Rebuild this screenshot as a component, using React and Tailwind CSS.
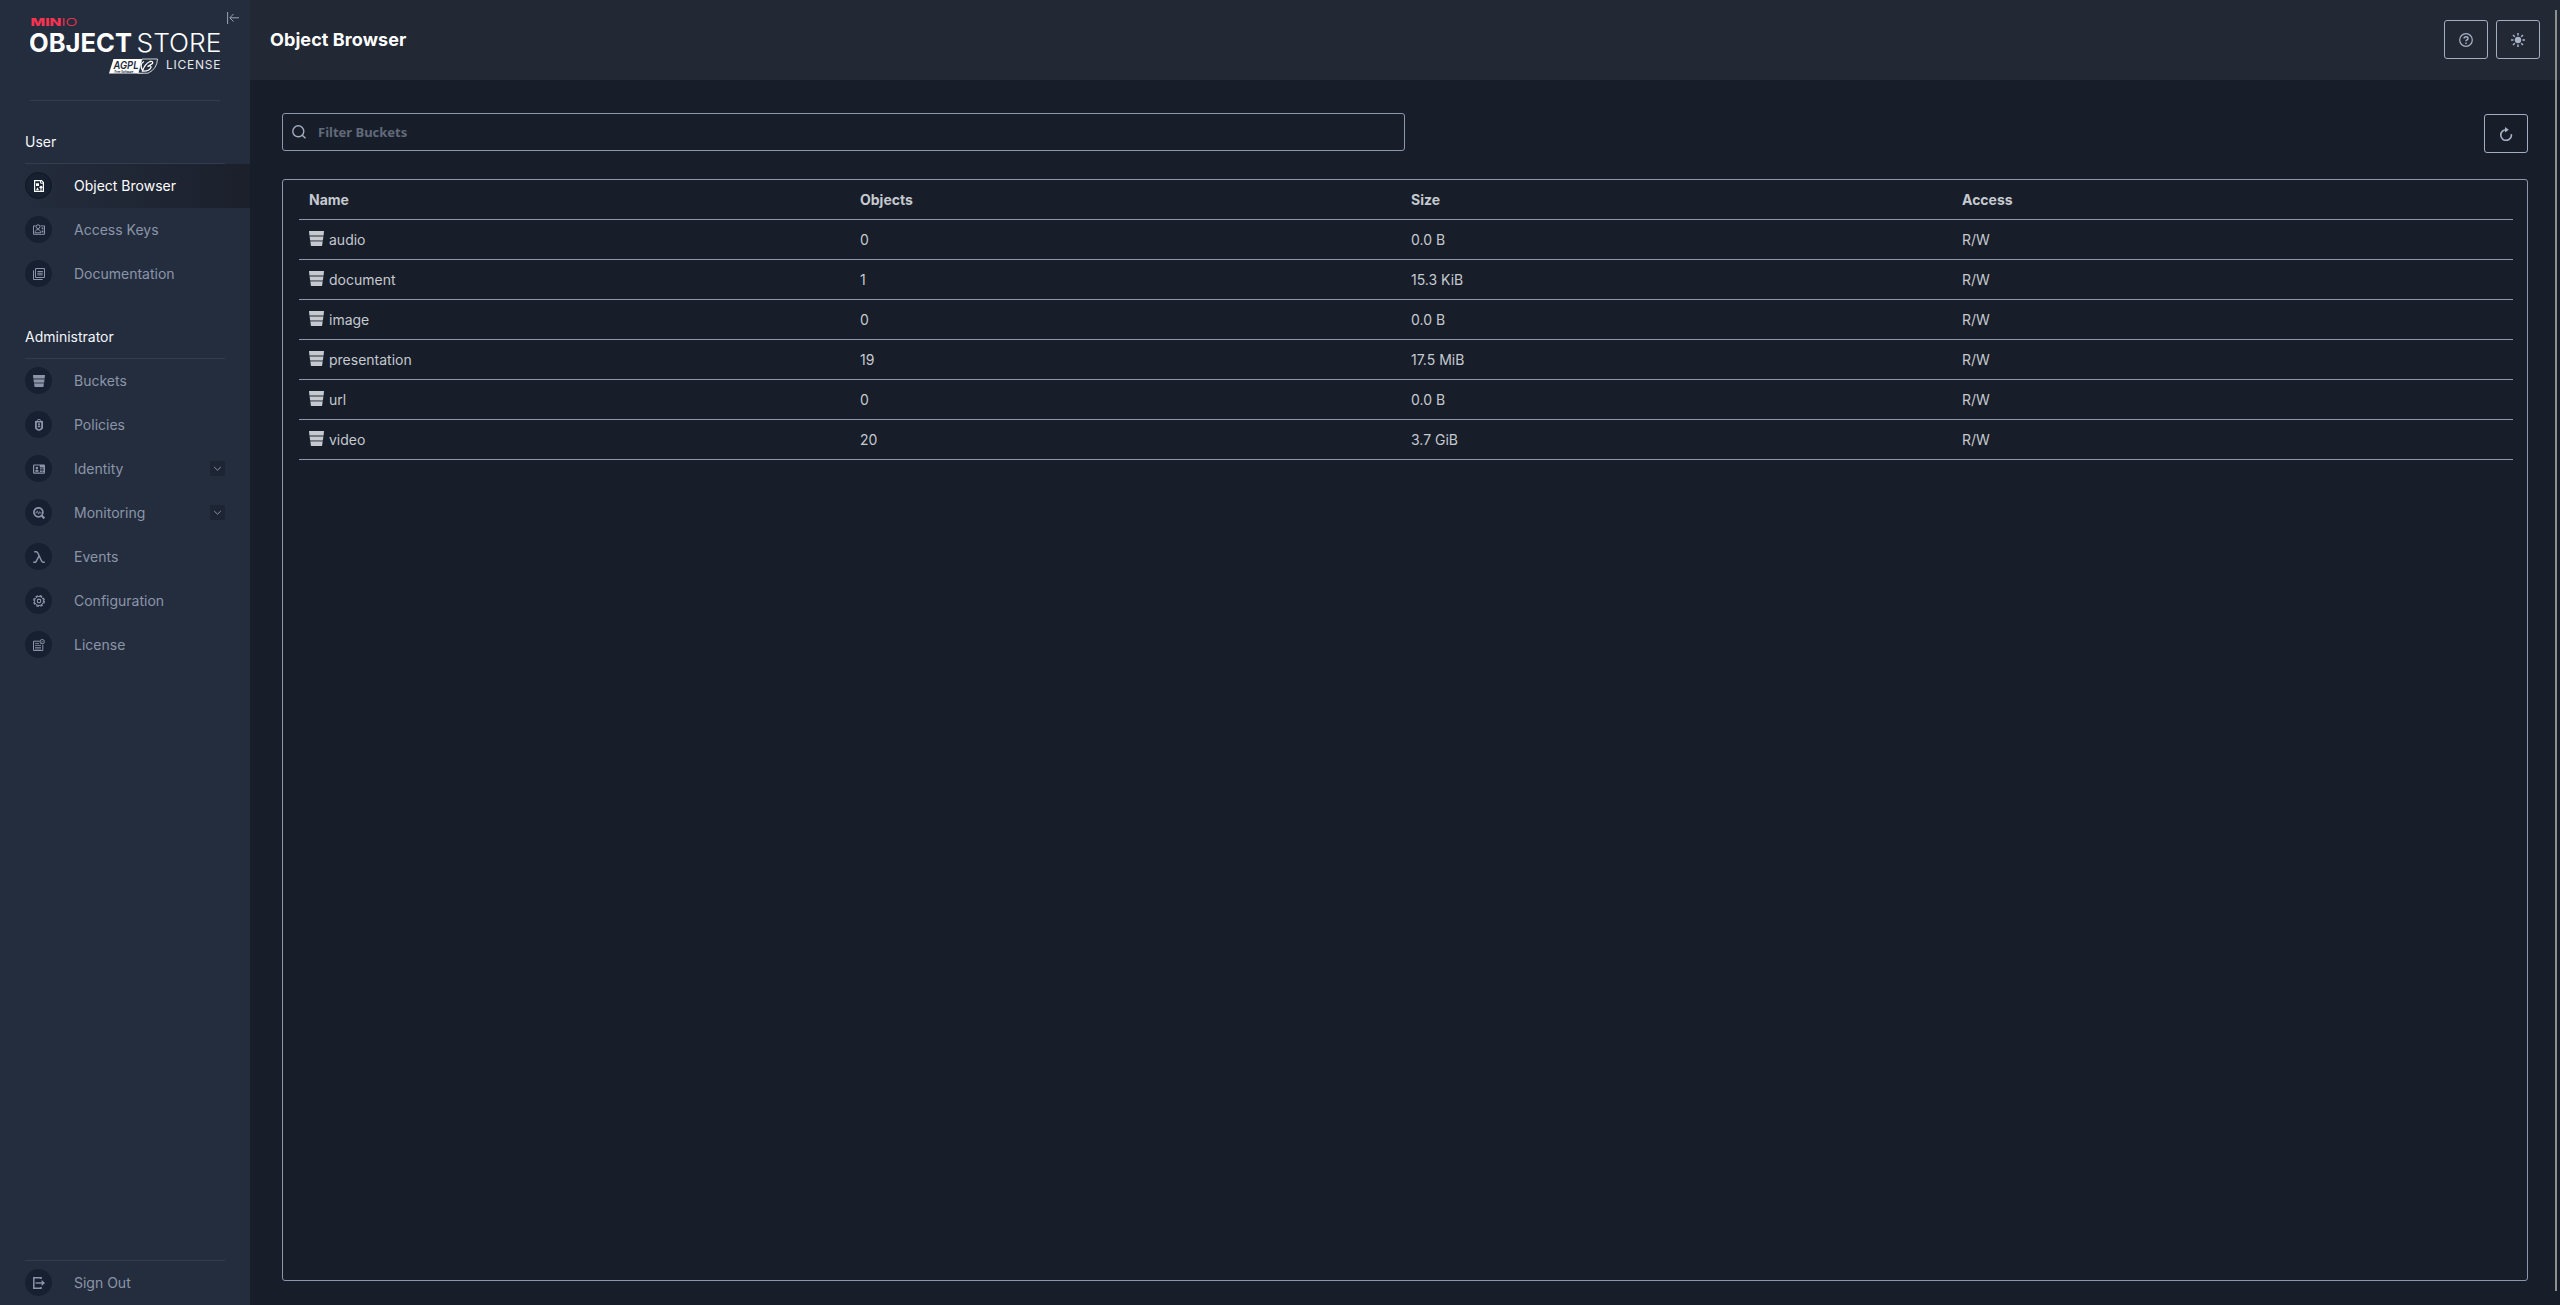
import React from "react";

const Ico = ({ children, size = "size-3", box = "0 0 12 12" }) => (
  <svg viewBox={box} className={`${size} shrink-0`} fill="none" stroke="currentColor" strokeWidth="1">
    {children}
  </svg>
);

const BucketShape = () => (
  <g stroke="none" fill="currentColor">
    <path d="M0 0H12L11.7 3.3H.3Z" />
    <path d="M.3 3.3H11.7L11.5 4.6H.5Z" opacity=".5" />
    <path d="M.5 4.600H11.500L11.100 7.400H.9Z" />
    <path d="M.9 7.400H11.100L10.900 8.400H1.100Z" opacity=".5" />
    <path d="M1.100 8.400H10.900L10.500 11.500Q10.400 12 9.900 12H2.100Q1.600 12 1.500 11.500Z" />
  </g>
);

const icons = {
  browser: (
    <Ico>
      <path d="M1.6.6H8.6L10.4 2.4V11.4H1.6Z" strokeWidth="1.2" />
      <path d="M7.6.6V3.2H10.4" />
      <path d="M3 3.2H6V6H3ZM3 10.2L4.5 7.3L6 10.2Z" fill="currentColor" stroke="none" />
      <circle cx="8" cy="7.2" r="1.5" fill="currentColor" stroke="none" />
      <path d="M7 9.5H9V10.5H7Z" fill="currentColor" stroke="none" />
    </Ico>
  ),
  keys: (
    <Ico>
      <path d="M2.8 1.9H.5V10.3H11.5V1.9H7.5" />
      <circle cx="5" cy="2.7" r="1.9" />
      <path d="M2 8.8C2.2 6.6 3.4 5.6 5 5.6S7.4 6.6 7.6 8.8Z" />
      <path d="M8.7 3.4H10.4V5.2H8.7ZM8.7 6.4H10.4V8.4H8.7Z" fill="currentColor" stroke="none" />
    </Ico>
  ),
  docs: (
    <Ico>
      <path d="M2.500.5H11.500V9.500H2.500Z" />
      <path d="M.5 2.400V11.500H9.600M4.400 3.500H9.800M4.400 5.200H9.800M4.400 6.900H9.800" />
    </Ico>
  ),
  bucket: <Ico><BucketShape /></Ico>,
  policy: (
    <Ico>
      <path d="M4.2 2.4V1.8Q4.2.5 6 .5T7.8 1.8V2.4" />
      <path fillRule="evenodd" fill="currentColor" stroke="none" d="M2 2H10V9Q10 10.300 6 12Q2 10.300 2 9ZM3.800 3.600V8.600Q4 9.500 6 10.400Q8 9.500 8.200 8.600V3.600Z" />
      <path fill="currentColor" stroke="none" d="M5.100 4.200H6.900V6H6.500V7H7.300V8.300H4.700V7H5.500V6H5.100Z" />
    </Ico>
  ),
  identity: (
    <Ico>
      <rect x=".6" y="2" width="10.8" height="8.2" rx=".6" strokeWidth="1.2" />
      <path d="M6.8 2H11.4V4.4H6.8ZM7 5.2H8.8V6.6H7ZM9.4 5.2H11V6.6H9.4ZM7 7.4H8.8V9H7ZM9.4 7.4H11V9H9.4ZM2.2 8.8V7.6L3.2 6.8H4.6L5.6 7.6V8.8Z" fill="currentColor" stroke="none" />
      <circle cx="3.9" cy="5" r="1.3" fill="currentColor" stroke="none" />
    </Ico>
  ),
  monitoring: (
    <Ico>
      <circle cx="5.4" cy="5.3" r="4.5" strokeWidth="1.7" />
      <path d="M8.2 8.2L11.4 11.4" strokeWidth="2.2" />
      <path d="M2.2 6H3.4L4.3 3.8L5.6 7.2L6.6 4.6L7.2 6H8.8" strokeWidth=".8" />
    </Ico>
  ),
  lambda: (
    <Ico>
      <path d="M1.2.8H3.2Q4.2.8 4.8 2L8.6 10Q9.2 11.2 10.2 11.2H11.8" strokeWidth="1.5" />
      <path d="M6 5.2L3 10.6Q2.6 11.3 1.8 11.3H.2" strokeWidth="1.5" />
    </Ico>
  ),
  gear: (
    <Ico>
      <circle cx="6" cy="6" r="5.3" strokeDasharray="2.6 1.56" strokeWidth="1.3" />
      <circle cx="6" cy="6" r="4.5" strokeWidth="1" />
      <rect x="4.4" y="4.4" width="3.2" height="3.2" rx=".8" strokeWidth="1.1" />
    </Ico>
  ),
  license: (
    <Ico>
      <path d="M6.6 2.2H.5V11.5H9.8V6" />
      <circle cx="9.2" cy="2.7" r="2.2" />
      <path d="M2 4.4H6M2 6.4H8M2 8.4H8M2 10H8M8.3 2.8L9 3.4L10.2 2.1" strokeWidth=".8" />
    </Ico>
  ),
  signout: (
    <Ico>
      <path d="M8 1.900V.7H.8V11.300H8V10" strokeWidth="1.500" />
      <path d="M2.500 6H10" strokeWidth="1.400" />
      <path d="M8.600 2.900L12 6L8.600 9.100Z" fill="currentColor" stroke="none" />
    </Ico>
  ),
};

function Item({ icon, label, active, expand }) {
  return (
    <div
      className={`flex h-11 items-start pl-[25px] pt-2 ${
        active ? "bg-linear-to-r from-transparent from-5% to-[#1b202b] to-100% text-white" : "text-[#8b95a9]"
      }`}
    >
      <div className={`flex size-[27px] items-center justify-center rounded-full bg-[#172030] pl-px ${active ? "border border-[#101622]" : ""}`}>
        {icons[icon]}
      </div>
      <span className="ml-[22px] text-sm leading-7">{label}</span>
      {expand && (
        <span className="ml-auto mr-[25px] mt-1.5 flex size-[15px] items-center justify-center rounded-xs bg-[#1d2433]">
          <Ico size="size-[7px]" box="0 0 7 7"><path d="M.2 2L3.5 5.200L6.800 2" /></Ico>
        </span>
      )}
    </div>
  );
}

const Section = ({ title }) => (
  <div className="ml-[25px] mr-[25px] h-[43px] border-b border-[#343c4e] pt-[11px] text-sm leading-5 text-[#f4f6fa]">{title}</div>
);

function Logo() {
  return (
    <svg width="195" height="64" viewBox="0 0 195 64" className="ml-[30px] mt-[14px] block" fontFamily="Inter, sans-serif">
      <g fill="#fb3351">
        <text x="0.500" y="12" fontSize="10.500" fontWeight="800" textLength="31" lengthAdjust="spacingAndGlyphs">MIN</text>
        <text x="31.500" y="12" fontSize="10.500" fontWeight="300" textLength="16" lengthAdjust="spacingAndGlyphs">IO</text>
      </g>
      <g fill="#fff">
        <text x="-1" y="37.500" fontSize="25.500" fontWeight="700" textLength="103" lengthAdjust="spacingAndGlyphs">OBJECT</text>
        <text x="106.500" y="37.500" fontSize="25.500" fontWeight="300" textLength="85" lengthAdjust="spacingAndGlyphs">STORE</text>
        <text x="136" y="55" fontSize="12" fontWeight="400" fill="#e4e7ec" textLength="54.500" lengthAdjust="spacing">LICENSE</text>
      </g>
      <path d="M83.500 45H127L122 59.500H79Z" fill="#fff" />
      <path d="M112 45H129V61H121L109 59Z" fill="#242d3e" />
      <path d="M112 45H127.500Q127 55 118 59.200H108L110 52Z" fill="#242d3e" stroke="#fff" strokeWidth=".8" />
      <path d="M112.500 56.500Q109 50 114 47.500M112.500 57Q115 49.500 120 47.500Q123.500 46.800 122.500 49.500L117.500 52.500Q121.500 51 121 53.500Q119 57.500 112.500 57Z" fill="none" stroke="#fff" strokeWidth="1.300" />
      <text x="83.500" y="55" fontSize="11" fontWeight="600" fontStyle="italic" fill="#242d3e" textLength="25" lengthAdjust="spacingAndGlyphs">AGPL</text>
      <text x="84.500" y="58.500" fontSize="3" fontWeight="700" fill="#242d3e" textLength="19" lengthAdjust="spacingAndGlyphs">Free Software</text>
    </svg>
  );
}

const rows = [
  ["audio", "0", "0.0 B"],
  ["document", "1", "15.3 KiB"],
  ["image", "0", "0.0 B"],
  ["presentation", "19", "17.5 MiB"],
  ["url", "0", "0.0 B"],
  ["video", "20", "3.7 GiB"],
];

const Btn = ({ children }) => (
  <button className="flex h-[39px] w-11 items-center justify-center rounded-[3px] border border-[#a3adc0] text-[#a9b3c6]">{children}</button>
);

export default function App() {
  return (
    <div className="relative flex h-[1305px] w-[2560px] overflow-hidden bg-[#181e29] font-['Inter',sans-serif]">
      <aside className="relative flex w-[250px] shrink-0 flex-col bg-[#242d3e]">
        <Logo />
        <svg viewBox="0 0 12 12" className="absolute left-[227px] top-3 size-3" fill="none" stroke="#9ba3b2">
          <path d="M.6 0V12M12 5.800H3M6.500 2L2.800 5.800L6.500 9.600" />
        </svg>
        <div className="ml-[30px] mt-[22px] h-px w-[190px] bg-[#343c4e]" />
        <div className="mt-5"><Section title="User" /></div>
        <Item icon="browser" label="Object Browser" active />
        <Item icon="keys" label="Access Keys" />
        <Item icon="docs" label="Documentation" />
        <div className="mt-5"><Section title="Administrator" /></div>
        <Item icon="bucket" label="Buckets" />
        <Item icon="policy" label="Policies" />
        <Item icon="identity" label="Identity" expand />
        <Item icon="monitoring" label="Monitoring" expand />
        <Item icon="lambda" label="Events" />
        <Item icon="gear" label="Configuration" />
        <Item icon="license" label="License" />
        <div className="mt-auto">
          <div className="ml-[25px] h-px w-[200px] bg-[#343c4e]" />
          <Item icon="signout" label="Sign Out" />
        </div>
      </aside>

      <main className="flex grow flex-col">
        <header className="flex h-20 items-start justify-between bg-[#222834] px-5 pt-5">
          <h1 className="text-lg leading-[39px] font-bold tracking-[0.08px] text-white">Object Browser</h1>
          <div className="flex gap-2">
            <Btn>
              <Ico size="size-3.5" box="0 0 14 14">
                <circle cx="7" cy="7" r="6.300" strokeWidth="1.200" />
                <path d="M5 5.600Q5 3.700 7 3.700T9 5.400Q9 6.600 7.800 7Q7 7.300 7 8.300M7 9.400V10.900" strokeWidth="1.400" />
              </Ico>
            </Btn>
            <Btn>
              <Ico size="size-3.5" box="0 0 14 14">
                <circle cx="7" cy="7" r="3.200" fill="currentColor" stroke="none" />
                <path d="M7 0V2.500M7 11.500V14M0 7H2.500M11.500 7H14M2 2L3.800 3.800M10.200 10.200L12 12M12 2L10.200 3.800M3.800 10.200L2 12" strokeWidth="1.500" />
              </Ico>
            </Btn>
          </div>
        </header>

        <div className="flex grow flex-col px-8 pb-6 pt-[33px]">
          <div className="flex items-start justify-between">
            <div className="flex h-[38px] w-[1123px] items-center rounded-[3px] border border-[#8d97aa] pl-[9px]">
              <Ico size="size-3.5" box="0 0 14 14">
                <g stroke="#a3adc0" strokeWidth="1.400">
                  <circle cx="6.300" cy="6.300" r="5.500" />
                  <path d="M10.300 10.300L13.500 13.300" />
                </g>
              </Ico>
              <span className="ml-3 mt-px font-['Noto_Sans',sans-serif] text-[13px] font-bold text-[#616a7a]">Filter Buckets</span>
            </div>
            <div className="mt-px">
              <Btn>
                <Ico size="size-3.5" box="0 0 14 14">
                  <path d="M7.500 2.800A5.300 5.300 0 1 0 12.300 7.200" strokeWidth="1.600" />
                  <path d="M6 0L9.800 2.700L6 5.600Z" fill="currentColor" stroke="none" />
                </Ico>
              </Btn>
            </div>
          </div>

          <section className="mt-[26px] grow rounded-[3px] border border-[#8d97aa] pl-4 pr-[14px] text-sm text-[#c5c9d0]">
            <div className="grid h-10 grid-cols-[551px_551px_551px_1fr] items-center border-b border-[#8d97aa] pl-2.5 font-bold">
              <span>Name</span><span>Objects</span><span>Size</span><span>Access</span>
            </div>
            {rows.map(([name, count, size]) => (
              <div key={name} className="grid h-10 grid-cols-[551px_551px_551px_1fr] items-center border-b border-[#8d97aa] pl-2.5">
                <span className="flex items-center gap-[5px]">
                  <span className="-mt-0.5"><Ico size="size-[15px]"><BucketShape /></Ico></span>
                  {name}
                </span>
                <span>{count}</span><span>{size}</span><span>R/W</span>
              </div>
            ))}
          </section>
        </div>
      </main>
      <div className="absolute left-[2555px] top-2.5 h-[1281px] w-0.5 bg-[#8f8f8f]" />
    </div>
  );
}
